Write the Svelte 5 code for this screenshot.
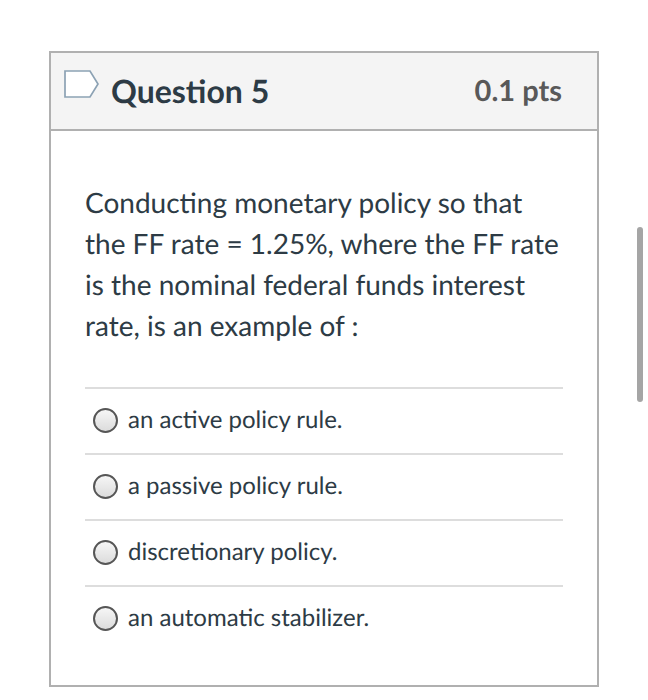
<script>
let selected = $state(null);

const question = {
  title: "Question 5",
  points: "0.1 pts",
  text: "Conducting monetary policy so that the FF rate = 1.25%, where the FF rate is the nominal federal funds interest rate, is an example of :",
};

const answers = [
  { id: "active", label: "an active policy rule." },
  { id: "passive", label: "a passive policy rule." },
  { id: "discretionary", label: "discretionary policy." },
  { id: "stabilizer", label: "an automatic stabilizer." },
];
</script>

<main class="page">
  <section class="question">
    <header class="question-header">
      <button class="flag" aria-label="Flag question">
        <svg width="36" height="28" viewBox="0 0 36 28" aria-hidden="true">
          <path d="M1 1H26L34 14L26 27H1Z" fill="#fff" stroke="#8ca2b4" stroke-width="1.7" />
        </svg>
      </button>
      <h1>{question.title}</h1>
      <span class="points">{question.points}</span>
    </header>

    <div class="question-body">
      <p id="question-text">{question.text}</p>
      <div class="answers" role="radiogroup" aria-labelledby="question-text">
        {#each answers as answer (answer.id)}
          <label class="answer">
            <input type="radio" name="answer" value={answer.id} bind:group={selected} />
            <span>{answer.label}</span>
          </label>
        {/each}
      </div>
    </div>
  </section>
  <div class="scroll-thumb"></div>
</main>

<style>
  :global(body) {
    background: #fff;
  }

  .page {
    position: relative;
    padding: 51px 49px 14px;
    font-family: Lato, sans-serif;
    color: #2d3b45;
    text-rendering: geometricPrecision;
  }

  .question {
    border: 2px solid #b0b0b0;
  }

  .question-header {
    display: flex;
    align-items: center;
    gap: 11px;
    padding: 17px 35px 17px 13px;
    background: #f4f4f4;
    border-bottom: 2px solid #b0b0b0;
  }

  .flag {
    align-self: flex-start;
    display: flex;
    padding: 0;
    background: none;
    border: 0;
    cursor: pointer;
  }

  h1 {
    flex: 1;
    margin: 0;
    font-size: 32px;
    line-height: 42px;
    font-weight: 700;
  }

  .points {
    font-size: 29px;
    line-height: 42px;
    font-weight: 700;
    color: #595959;
  }

  .question-body {
    padding: 51px 34px 34px;
  }

  p {
    margin: 0 0 41px;
    font-size: 28px;
    line-height: 41px;
  }

  .answer {
    display: flex;
    align-items: center;
    gap: 10px;
    padding: 15px 0 17px 8px;
    border-top: 2px solid #ddd;
    font-size: 24px;
    line-height: 32px;
    cursor: pointer;
  }

  input {
    appearance: none;
    width: 25px;
    height: 25px;
    margin: 0;
    border: 2px solid #565656;
    border-radius: 50%;
    background: linear-gradient(#f6f6f6, #dcdcdc);
  }

  input:checked {
    background: radial-gradient(#2d3b45 40%, #eee 45%);
  }

  .scroll-thumb {
    position: absolute;
    top: 227px;
    right: 5px;
    width: 6px;
    height: 175px;
    border-radius: 3px;
    background: #a5a5a5;
  }
</style>
